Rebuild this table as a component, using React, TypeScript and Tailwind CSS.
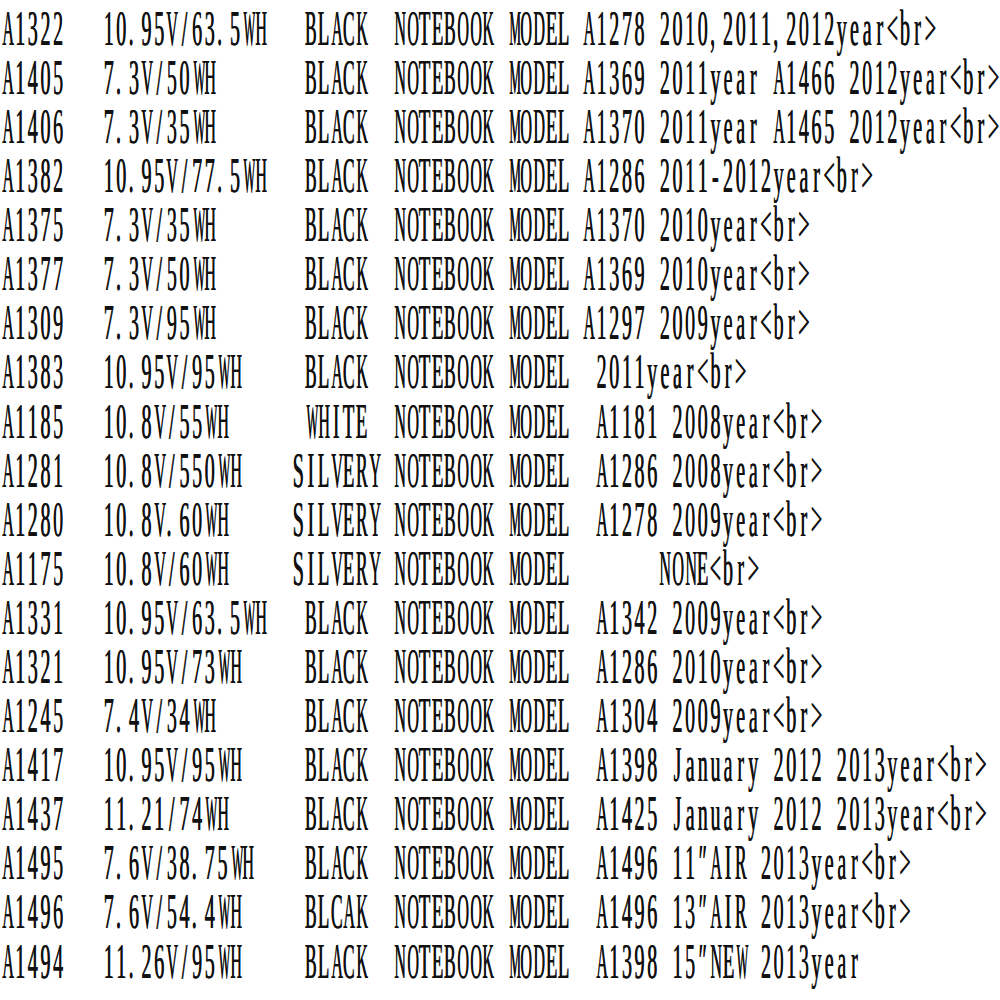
const rows: { model: string; spec: string; color: string; rest: string; at: number }[] = [
  { model: 'A1322', spec: '10.95V/63.5WH', color: 'BLACK', rest: 'A1278 2010,2011,2012year<br>', at: 46 },
  { model: 'A1405', spec: '7.3V/50WH', color: 'BLACK', rest: 'A1369 2011year A1466 2012year<br>', at: 46 },
  { model: 'A1406', spec: '7.3V/35WH', color: 'BLACK', rest: 'A1370 2011year A1465 2012year<br>', at: 46 },
  { model: 'A1382', spec: '10.95V/77.5WH', color: 'BLACK', rest: 'A1286 2011-2012year<br>', at: 46 },
  { model: 'A1375', spec: '7.3V/35WH', color: 'BLACK', rest: 'A1370 2010year<br>', at: 46 },
  { model: 'A1377', spec: '7.3V/50WH', color: 'BLACK', rest: 'A1369 2010year<br>', at: 46 },
  { model: 'A1309', spec: '7.3V/95WH', color: 'BLACK', rest: 'A1297 2009year<br>', at: 46 },
  { model: 'A1383', spec: '10.95V/95WH', color: 'BLACK', rest: '2011year<br>', at: 47 },
  { model: 'A1185', spec: '10.8V/55WH', color: 'WHITE', rest: 'A1181 2008year<br>', at: 47 },
  { model: 'A1281', spec: '10.8V/550WH', color: 'SILVERY', rest: 'A1286 2008year<br>', at: 47 },
  { model: 'A1280', spec: '10.8V.60WH', color: 'SILVERY', rest: 'A1278 2009year<br>', at: 47 },
  { model: 'A1175', spec: '10.8V/60WH', color: 'SILVERY', rest: 'NONE<br>', at: 52 },
  { model: 'A1331', spec: '10.95V/63.5WH', color: 'BLACK', rest: 'A1342 2009year<br>', at: 47 },
  { model: 'A1321', spec: '10.95V/73WH', color: 'BLACK', rest: 'A1286 2010year<br>', at: 47 },
  { model: 'A1245', spec: '7.4V/34WH', color: 'BLACK', rest: 'A1304 2009year<br>', at: 47 },
  { model: 'A1417', spec: '10.95V/95WH', color: 'BLACK', rest: 'A1398 January 2012 2013year<br>', at: 47 },
  { model: 'A1437', spec: '11.21/74WH', color: 'BLACK', rest: 'A1425 January 2012 2013year<br>', at: 47 },
  { model: 'A1495', spec: '7.6V/38.75WH', color: 'BLACK', rest: 'A1496 11″AIR 2013year<br>', at: 47 },
  { model: 'A1496', spec: '7.6V/54.4WH', color: 'BLCAK', rest: 'A1496 13″AIR 2013year<br>', at: 47 },
  { model: 'A1494', spec: '11.26V/95WH', color: 'BLACK', rest: 'A1398 15″NEW 2013year', at: 47 },
]

// pad each piece out to its character column, like the original fixed-width listing
const buildLine = (parts: [number, string][]) => {
  let line = ''
  for (const [col, text] of parts) {
    line = line.padEnd(col, ' ') + text
  }
  return line
}

// Times advance widths (per 1000) for the wide glyphs; the rest are ~500
const glyphWidth: Record<string, number> = {
  A: 722, B: 667, C: 667, D: 722, E: 611, H: 722, K: 722, L: 611, M: 889, N: 722,
  O: 722, R: 667, S: 556, T: 611, V: 722, W: 944, Y: 722, m: 778, w: 722,
}
const FONT = 20
const MAX_W = 11.6

// squeeze wide serif glyphs so every one fits the fixed cell
const squeeze = (c: string) => {
  const w = ((glyphWidth[c] ?? 500) * FONT) / 1000
  return w > MAX_W ? MAX_W / w : 1
}

const Line = ({ text }: { text: string }) => (
  <div className="h-[49.1px]">
    <div className="flex origin-top-left scale-y-[2.5] font-['Liberation_Serif',serif] text-[20px] leading-[19px] [text-shadow:0.45px_0_0_#111]">
      {text.split('').map((c, i) => {
        const k = squeeze(c)
        const punct = c === '.' || c === ','
        return (
          <span
            key={i}
            className={`w-[12.65px] shrink-0 whitespace-pre ${punct ? 'pl-[1px] text-left' : 'text-center'}`}
            style={k < 1 ? { transform: `scaleX(${k})` } : undefined}
          >
            {c}
          </span>
        )
      })}
    </div>
  </div>
)

export default function App() {
  return (
    <div className="min-h-[1000px] w-[1000px] overflow-hidden bg-white pl-[1px] pt-[4.75px] text-[#111]">
      {rows.map((r) => (
        <Line
          key={r.model + r.spec}
          text={buildLine([
            [0, r.model],
            [8, r.spec],
            [r.color === 'SILVERY' ? 23 : 24, r.color],
            [31, 'NOTEBOOK'],
            [40, 'MODEL'],
            [r.at, r.rest],
          ])}
        />
      ))}
    </div>
  )
}
